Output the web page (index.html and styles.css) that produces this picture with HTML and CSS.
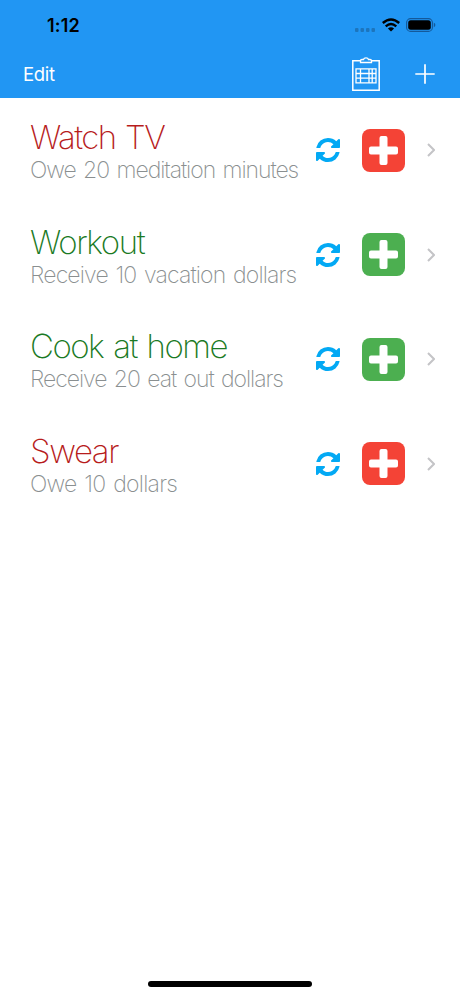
FILE: index.html
```html
<!DOCTYPE html>
<html lang="en">
<head>
    <meta charset="UTF-8">
    <meta name="viewport" content="width=device-width, initial-scale=1.0">
    <title>Habits</title>
    <link rel="stylesheet" href="styles.css">
</head>
<body>

    <!-- Shared icons -->
    <svg class="sprite" width="0" height="0">
        <symbol id="refresh" viewBox="0 0 1536 1536">
            <path d="M1511 928q0 5-1 7-64 268-268 434.500T764 1536q-146 0-282.500-55T238 1324l-129 129q-19 19-45 19t-45-19-19-45V960q0-26 19-45t45-19h448q26 0 45 19t19 45-19 45l-137 137q71 66 161 102t187 36q134 0 250-65t186-179q11-17 53-117 8-23 30-23h192q13 0 22.500 9.500t9.500 22.500zm25-800v448q0 26-19 45t-45 19h-448q-26 0-45-19t-19-45 19-45l138-138Q969 256 768 256q-134 0-250 65T332 500q-11 17-53 117-8 23-30 23H50q-13 0-22.500-9.500T18 608v-7q65-268 270-434.500T768 0q146 0 284 55.500T1297 212l130-129q19-19 45-19t45 19 19 45z"/>
        </symbol>
        <symbol id="plus" viewBox="0 0 29 29">
            <path d="M12.500 0h4q2 0 2 2v8.500H27q2 0 2 2v4q0 2-2 2h-8.500V27q0 2-2 2h-4q-2 0-2-2v-8.500H2q-2 0-2-2v-4q0-2 2-2h8.500V2q0-2 2-2z"/>
        </symbol>
        <symbol id="chevron" viewBox="0 0 8 14">
            <path d="M1 1l6 6-6 6" fill="none" stroke="#c4c4c7" stroke-width="2"/>
        </symbol>
    </svg>

    <div class="screen">
        <header class="header">
            <div class="status-bar">
                <span class="time">1:12</span>
                <div class="status-icons">
                    <svg class="signal" width="20" height="4" viewBox="0 0 20 4">
                        <rect x="0" y="0" width="3.500" height="4" rx="1"/>
                        <rect x="5.500" y="0" width="3.500" height="4" rx="1"/>
                        <rect x="11" y="0" width="3.500" height="4" rx="1"/>
                        <rect x="16.500" y="0" width="3.500" height="4" rx="1"/>
                    </svg>
                    <svg class="wifi" width="18" height="14" viewBox="0 0 18 14">
                        <path d="M.8 5Q9-2.200 17.200 5M3.700 8.300q5.300-4.600 10.600 0" fill="none" stroke="#000" stroke-width="2.400"/>
                        <path d="M5.900 10.500q3.100-2.600 6.200 0L9 13.600z"/>
                    </svg>
                    <svg class="battery" width="30" height="14" viewBox="0 0 30 14">
                        <rect x=".6" y=".6" width="25.800" height="12.800" rx="4" fill="none" stroke="#14599a" stroke-width="1.100"/>
                        <rect x="2.200" y="2.200" width="22.600" height="9.600" rx="2.500"/>
                        <path d="M27.800 4.800q1.600.6 1.600 2.200t-1.600 2.200z" fill="#14599a"/>
                    </svg>
                </div>
            </div>
            <nav class="nav-bar">
                <a class="edit">Edit</a>
                <svg class="clipboard" width="28" height="34" viewBox="0 0 28 34" fill="none" stroke="#fff">
                    <path d="M8.500 3.800H.8v29.400h26.400V3.800h-7.700" stroke-width="1.500"/>
                    <path d="M8.500 5.500V3.800q0-1.300 1.500-1.300h1.500Q12 .8 14 .8t2.500 1.700H18q1.500 0 1.500 1.300v1.700z" stroke-width="1.300"/>
                    <path d="M4 11.800h20v14H4zM4 16.500h20M4 21.200h20M8.500 11.800v14M17 11.800v14M20.200 11.800v14" stroke-width="1.300"/>
                </svg>
                <svg class="add" width="20" height="20" viewBox="0 0 20 20">
                    <path d="M10 .3v19.400M.3 10h19.400" stroke="#fff" stroke-width="1.700"/>
                </svg>
            </nav>
        </header>

        <main class="list">
            <div class="row">
                <div class="text">
                    <h2 class="title title-tv owe">Watch TV</h2>
                    <p class="detail detail-tv">Owe 20 meditation minutes</p>
                </div>
                <svg class="refresh"><use href="#refresh"/></svg>
                <button class="btn btn-owe"><svg><use href="#plus"/></svg></button>
                <svg class="chevron"><use href="#chevron"/></svg>
            </div>
            <div class="row">
                <div class="text">
                    <h2 class="title title-workout receive">Workout</h2>
                    <p class="detail detail-workout">Receive 10 vacation dollars</p>
                </div>
                <svg class="refresh"><use href="#refresh"/></svg>
                <button class="btn btn-receive"><svg><use href="#plus"/></svg></button>
                <svg class="chevron"><use href="#chevron"/></svg>
            </div>
            <div class="row">
                <div class="text">
                    <h2 class="title title-cook receive">Cook at home</h2>
                    <p class="detail detail-cook">Receive 20 eat out dollars</p>
                </div>
                <svg class="refresh"><use href="#refresh"/></svg>
                <button class="btn btn-receive"><svg><use href="#plus"/></svg></button>
                <svg class="chevron"><use href="#chevron"/></svg>
            </div>
            <div class="row">
                <div class="text">
                    <h2 class="title title-swear owe">Swear</h2>
                    <p class="detail detail-swear">Owe 10 dollars</p>
                </div>
                <svg class="refresh"><use href="#refresh"/></svg>
                <button class="btn btn-owe"><svg><use href="#plus"/></svg></button>
                <svg class="chevron"><use href="#chevron"/></svg>
            </div>
        </main>

        <div class="home-indicator"></div>
    </div>

</body>
</html>
```
FILE: styles.css
```css
:root {
    --primary: #2196f3;
    --red: #f44336;
    --green: #4caf50;
    --refresh: #03a9f4;
}

* {
    box-sizing: border-box;
    margin: 0;
    padding: 0;
}

body {
    font-family: 'Inter', 'Liberation Sans', sans-serif;
    background: #fff;
}

svg {
    display: block;
    flex-shrink: 0;
}

.sprite {
    position: absolute;
}

.screen {
    display: flex;
    flex-direction: column;
    height: 996px;
    overflow: hidden;
}

/* Header */
.header {
    height: 98px;
    background: var(--primary);
}

.status-bar {
    display: flex;
    justify-content: space-between;
    align-items: center;
    height: 50px;
    padding: 0 24px 0 47px;
}

.time {
    font-size: 18px;
    font-weight: 600;
    letter-spacing: 0.2px;
}

.status-icons {
    display: flex;
    align-items: center;
}

.signal {
    margin: 9px 7px 0 0;
    fill: #1c75bd;
}

.wifi {
    margin-right: 6px;
}

.nav-bar {
    display: flex;
    align-items: center;
    height: 48px;
    padding: 0 25px 0 23px;
}

.edit {
    margin-right: auto;
    padding-bottom: 1px;
    font-size: 18.500px;
    letter-spacing: -0.300px;
    color: #fff;
}

.clipboard {
    margin-right: 35px;
}

/* List */
.list {
    flex: 1;
}

.row {
    display: flex;
    align-items: center;
    height: 104.500px;
    padding: 0 25px 0 30px;
}

.text {
    flex: 1;
    padding-top: 4px;
    white-space: nowrap;
}

.title {
    font-size: 33px;
    font-weight: 200;
    line-height: 36px;
    word-spacing: 2px;
}

.detail {
    font-size: 23px;
    font-weight: 200;
    line-height: 30px;
    word-spacing: 2px;
    color: #8a8f90;
}

.owe {
    color: #b71c1c;
}

.receive {
    color: #1b7a24;
}

.title-tv {
    letter-spacing: -1.600px;
}

.title-workout {
    letter-spacing: -1.400px;
}

.title-cook {
    letter-spacing: -1.500px;
}

.title-swear {
    letter-spacing: -1.400px;
}

.detail-tv {
    letter-spacing: -1.050px;
}

.detail-workout {
    letter-spacing: -0.850px;
}

.detail-cook {
    letter-spacing: -1.050px;
}

.detail-swear {
    letter-spacing: -0.750px;
}

.refresh {
    width: 24px;
    height: 24px;
    margin-right: 22px;
    fill: var(--refresh);
}

.btn {
    display: flex;
    justify-content: center;
    align-items: center;
    width: 43px;
    height: 43px;
    margin-right: 22px;
    border: none;
    border-radius: 8px;
}

.btn svg {
    width: 29px;
    height: 29px;
    fill: #fff;
}

.btn-owe {
    background: var(--red);
}

.btn-receive {
    background: var(--green);
}

.chevron {
    width: 8px;
    height: 14px;
}

.home-indicator {
    width: 164px;
    height: 6px;
    margin: 0 auto 9px;
    border-radius: 3px;
    background: #000;
}
```
